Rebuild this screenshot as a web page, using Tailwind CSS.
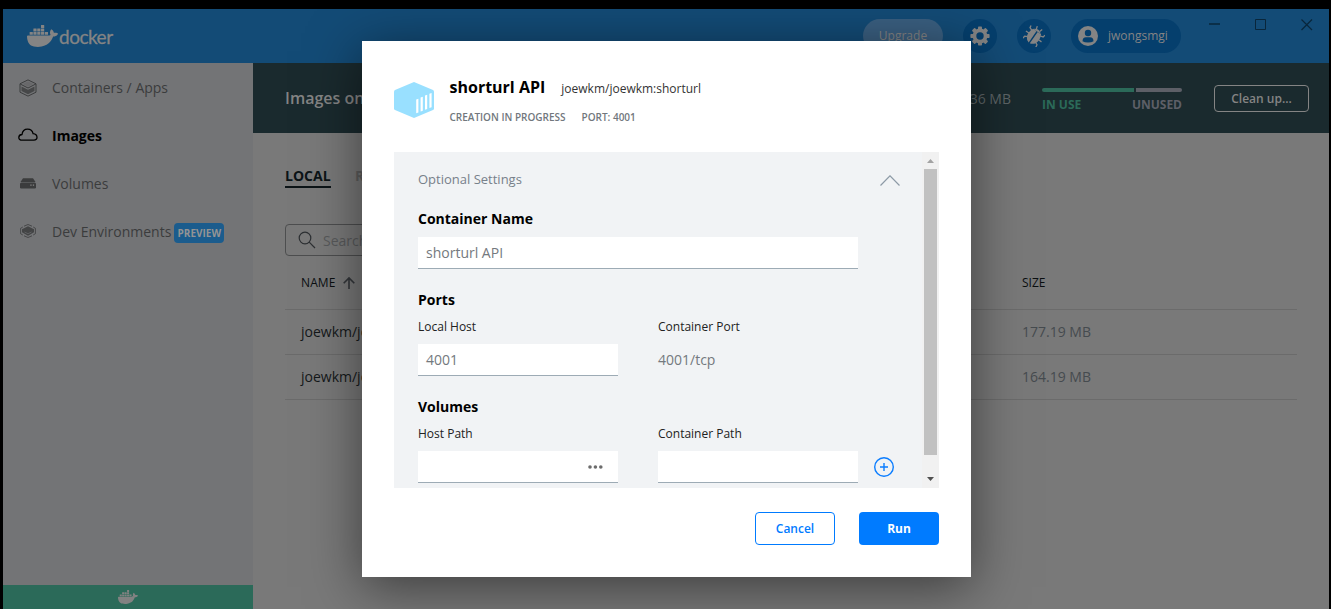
<!DOCTYPE html>
<html lang="en">
<head>
<meta charset="utf-8">
<title>Docker Desktop</title>
<script src="https://cdn.jsdelivr.net/npm/@tailwindcss/browser@4"></script>
</head>
<body class="bg-black font-['Open_Sans',sans-serif] w-[1331px] h-[609px] overflow-hidden">
<svg class="hidden">
  <symbol id="whale" viewBox="0 3.3 24 17.4" preserveAspectRatio="none"><path d="M13.983 11.078h2.119a.186.186 0 00.186-.185V9.006a.186.186 0 00-.186-.186h-2.119a.185.185 0 00-.185.185v1.888c0 .102.083.185.185.185m-2.954-5.43h2.118a.186.186 0 00.186-.186V3.574a.186.186 0 00-.186-.185h-2.118a.185.185 0 00-.185.185v1.888c0 .102.082.185.185.185m0 2.716h2.118a.187.187 0 00.186-.186V6.29a.186.186 0 00-.186-.185h-2.118a.185.185 0 00-.185.185v1.887c0 .102.082.185.185.186m-2.93 0h2.12a.186.186 0 00.184-.186V6.29a.185.185 0 00-.185-.185H8.1a.185.185 0 00-.185.185v1.887c0 .102.083.185.185.186m-2.964 0h2.119a.186.186 0 00.185-.186V6.29a.185.185 0 00-.185-.185H5.136a.186.186 0 00-.186.185v1.887c0 .102.084.185.186.186m5.893 2.715h2.118a.186.186 0 00.186-.185V9.006a.186.186 0 00-.186-.186h-2.118a.185.185 0 00-.185.185v1.888c0 .102.082.185.185.185m-2.93 0h2.12a.185.185 0 00.184-.185V9.006a.185.185 0 00-.184-.186h-2.12a.185.185 0 00-.184.185v1.888c0 .102.083.185.185.185m-2.964 0h2.119a.185.185 0 00.185-.185V9.006a.185.185 0 00-.184-.186h-2.12a.186.186 0 00-.186.186v1.887c0 .102.084.185.186.185m-2.92 0h2.12a.185.185 0 00.184-.185V9.006a.185.185 0 00-.184-.186h-2.12a.185.185 0 00-.184.185v1.888c0 .102.083.185.185.185M23.763 9.89c-.065-.051-.672-.51-1.954-.51-.338.001-.676.03-1.01.087-.248-1.7-1.653-2.53-1.716-2.566l-.344-.199-.226.327c-.284.438-.49.922-.612 1.43-.23.97-.09 1.882.403 2.661-.595.332-1.55.413-1.744.42H.751a.751.751 0 00-.75.748 11.376 11.376 0 00.692 4.062c.545 1.428 1.355 2.48 2.41 3.124 1.18.723 3.1 1.137 5.275 1.137.983.003 1.963-.086 2.93-.266a12.248 12.248 0 003.823-1.389c.98-.567 1.86-1.288 2.61-2.136 1.252-1.418 1.998-2.997 2.553-4.4h.221c1.372 0 2.215-.549 2.68-1.009.309-.293.55-.65.707-1.046l.098-.288Z"/></symbol>
</svg>

<div class="h-[609px] pt-[9px] pl-[3px] pr-[2px] flex flex-col">
  <!-- Title bar -->
  <header class="h-[54px] shrink-0 bg-[#134b76] text-[#848484] flex pl-6">
    <div class="flex pt-4 grow">
      <svg class="w-[31px] h-[22px] fill-current"><use href="#whale"/></svg>
      <span class="ml-[1px] mt-[1px] font-['Lato',sans-serif] text-[19px] leading-[22px] tracking-[-0.5px] [-webkit-text-stroke:0.3px]">docker</span>
    </div>
    <div class="flex pt-[10px] text-[12px] leading-[34px]">
      <div class="w-20 h-[34px] rounded-full bg-[#3a5f80] text-center">Upgrade</div>
      <div class="ml-5 size-[34px] rounded-full bg-[#053f6d] grid place-items-center">
        <svg class="size-5" viewBox="-10 -10 20 20">
          <g fill="currentColor">
            <rect x="-2" y="-9.6" width="4" height="19.2" rx=".8"/>
            <rect x="-2" y="-9.6" width="4" height="19.2" rx=".8" transform="rotate(45)"/>
            <rect x="-2" y="-9.6" width="4" height="19.2" rx=".8" transform="rotate(90)"/>
            <rect x="-2" y="-9.6" width="4" height="19.2" rx=".8" transform="rotate(135)"/>
            <circle r="7.4"/>
          </g>
          <circle r="3.7" fill="#053f6d"/>
        </svg>
      </div>
      <div class="ml-5 size-[34px] rounded-full bg-[#053f6d] grid place-items-center">
        <svg class="size-[22px]" viewBox="-11 -11 22 22">
          <g transform="rotate(35)" stroke="currentColor" fill="none" stroke-width="1.300">
            <path d="M-5 -3.500L-8 -4.500L-8.500 -7M5 -3.500L8 -4.500L8.500 -7M-5 .5H-9.500M5 .5H9.500M-4.500 4L-7.500 5.500L-8 8.500M4.500 4L7.500 5.500L8 8.500M-2 -7L-3 -10M2 -7L3 -10"/>
            <path d="M-4.500 -5.500Q0 -9.500 4.500 -5.500Z" fill="currentColor" stroke="none"/>
            <path d="M-.7 -5.500H-4.800Q-7.600 0 -5.600 4.500Q-3.800 7.600 -.7 8.300ZM.7 -5.500H4.800Q7.600 0 5.600 4.500Q3.800 7.600 .7 8.300Z" fill="currentColor" stroke="none"/>
          </g>
        </svg>
      </div>
      <div class="ml-5 w-[110px] h-[34px] rounded-full bg-[#053f6d] flex items-center pl-[7px]">
        <svg class="size-5" viewBox="0 0 20 20"><circle cx="10" cy="10" r="10" fill="currentColor"/><circle cx="10" cy="7" r="3.200" fill="#053f6d"/><path d="M4.500 15.200Q4.500 11.300 8 11.300H12Q15.500 11.300 15.500 15.200Q13.500 16.500 10 16.500Q6.500 16.500 4.500 15.200Z" fill="#053f6d"/></svg>
        <span class="ml-[10px]">jwongsmgi</span>
      </div>
    </div>
    <svg class="ml-[28px] mt-[10px] mr-4 w-[104px] h-3" fill="none" stroke="#09263b"><path d="M0 5H11" stroke-width="1.500"/><path d="M46.500 .5H56.500V10.500H46.500Z"/><path d="M92.500 .5L103 11M103 .5L92.500 11" stroke-width="1.200"/></svg>
  </header>

  <div class="flex grow min-h-0">
    <!-- Navigation -->
    <aside class="w-[250px] shrink-0 bg-[#737476] flex flex-col text-[14px] text-[#3b3c3d]">
      <nav class="grow">
        <div class="h-12 flex items-center pl-4">
          <svg class="w-[18px] h-[18px] mt-[1px]" viewBox="0 0 18 18" fill="none" stroke="currentColor"><path d="M9 .9L17 4.800V13.200L9 17.100L1 13.200V4.800Z"/><path d="M1.200 5L9 9L16.800 5"/><path d="M2.500 7.500L9 10.700L15.500 7.500V12L9 15.300L2.500 12Z" fill="currentColor" fill-opacity=".8" stroke="none"/><path d="M9 2.500L14.500 5L9 7.800L3.500 5Z" fill="currentColor" fill-opacity=".2" stroke="none"/></svg>
          <span class="ml-[15px]">Containers / Apps</span>
        </div>
        <div class="h-12 flex items-center pl-[15px] font-bold text-black">
          <svg class="w-5 h-[14px]" viewBox="0 0 20 14" fill="none" stroke="currentColor" stroke-width="1.300"><path d="M4.300 12.200C-.4 12.200-.2 6.900 4 6.500C4.500 2.700 7.200 1.200 9.600 1.200C12.300 1.200 14.500 3 15.100 5.600C20.300 6.300 20 12.200 15.900 12.200Z"/></svg>
          <span class="ml-[14px]">Images</span>
        </div>
        <div class="h-12 flex items-center pl-[17px]">
          <svg class="w-4 h-[11px]" viewBox="0 0 16 11" fill="currentColor"><path d="M3 .3H13L15.500 3.900H.5Z"/><path d="M0 6Q0 4.500 1.500 4.500H14.500Q16 4.500 16 6V9.300Q16 10.600 14.700 10.600H1.300Q0 10.600 0 9.300Z"/><path d="M10.300 6.500h1.300v1.300h-1.300zM12.800 6.500h1.300v1.300h-1.300z" fill="#848484"/></svg>
          <span class="ml-4">Volumes</span>
        </div>
        <div class="h-12 flex items-center pl-[17px]">
          <svg class="w-4 h-[14px]" viewBox="0 0 16 14" fill="none" stroke="currentColor" stroke-width=".8"><path d="M4 2.200L8 .5L12 2.200M4 11.800L8 13.500L12 11.800M2.800 3L.6 4.300V9.700L2.800 11M13.200 3L15.400 4.300V9.700L13.200 11"/><path d="M8 2.300L14 5.300V8.200L8 11.700L2 8.200V5.300Z" fill="currentColor" fill-opacity=".85" stroke="none"/><path d="M4.500 8L8 9.700L11.500 8" stroke="#656668"/></svg>
          <span class="ml-4">Dev Environments</span>
          <span class="ml-[3px] mt-[3px] w-[50px] h-5 rounded-[4px] bg-[#1b5c8d] text-[#949494] text-[10px] leading-[21px] font-bold text-center">PREVIEW</span>
        </div>
      </nav>
      <div class="h-6 bg-[#2b6a59] pt-[5px] flex justify-center"><svg class="w-5 h-[14px] fill-[#828282]"><use href="#whale"/></svg></div>
    </aside>

    <main class="grow bg-[#797979] flex flex-col">
      <section class="h-[70px] bg-[#1a2a2e] pl-8 pr-5 flex items-center text-[#848484]">
        <h1 class="text-[16px] font-semibold grow">Images on disk</h1>
        <span class="text-[14px] text-[#5e6567]">341.36 MB</span>
        <div class="ml-[31px] w-[140px] mt-[7px]">
          <div class="flex gap-[2px] h-1"><div class="w-[92px] bg-[#2b6a59] rounded-l-full"></div><div class="grow bg-[#5d5f67] rounded-r-full"></div></div>
          <div class="mt-[3px] flex justify-between text-[12px] leading-5 font-bold"><span class="text-[#2b6a59]">IN USE</span><span class="text-[#5d5f67]">UNUSED</span></div>
        </div>
        <div class="ml-8 w-[95px] h-[27px] border border-[#848484] rounded-[4px] text-[12px] leading-[25px] font-semibold text-center">Clean up...</div>
      </section>
      <section class="pl-8 pr-8 pt-[32px] text-[14px]">
        <div class="flex gap-6 leading-[21px] font-bold text-[#5e5e5e]"><span class="h-[23px] w-[46px] border-b-2 border-[#0c1417] text-[#0c1417]">LOCAL</span><span>REMOTE</span></div>
        <div class="mt-9 w-[280px] h-8 border border-[#4d4e4f] rounded-[4px] flex items-center pl-3 text-[#58595b]">
          <svg class="size-[18px]" viewBox="0 0 18 18" fill="none" stroke="#2d3033" stroke-width="1.200"><circle cx="7" cy="7" r="5.800"/><path d="M11.200 11.200L17 17"/></svg>
          <span class="ml-[7px]">Search...</span>
        </div>
        <div class="h-[54px] border-b border-[#6b6b6b] grid grid-cols-[721px_1fr] items-center pl-4 text-[12px] text-[#0b0f11]">
          <span class="flex items-center gap-2 tracking-[.1px]">NAME <svg class="size-3" viewBox="0 0 12 12" fill="none" stroke="#33363a" stroke-width="1.600"><path d="M6 12V1M.7 6.200L6 .9L11.300 6.200"/></svg></span><span>SIZE</span>
        </div>
        <div class="h-[45px] pb-[2px] border-b border-[#6b6b6b] grid grid-cols-[721px_1fr] items-center pl-4 font-medium text-[#14181a]"><span>joewkm/joewkm</span><span class="font-normal text-[#464b4f]">177.19 MB</span></div>
        <div class="h-[45px] pb-[2px] border-b border-[#6b6b6b] grid grid-cols-[721px_1fr] items-center pl-4 font-medium text-[#14181a]"><span>joewkm/joewkm</span><span class="font-normal text-[#464b4f]">164.19 MB</span></div>
      </section>
    </main>
  </div>
</div>

<!-- Run dialog -->
<div class="absolute left-[362px] top-[41px] w-[609px] h-[536px] bg-white px-8 pt-[34px] shadow-[0_10px_50px_rgba(0,0,0,0.5)]">
  <div class="flex h-[77px]">
    <svg class="w-10 h-9 mt-[7px]" viewBox="0 0 40 36"><path d="M20 0L39 8Q40 8.500 40 9.500V26.500Q40 27.500 39 28L20 36L1 28Q0 27.500 0 26.500V9.500Q0 8.500 1 8Z" fill="#99e0ff"/><path d="M22.200 17.500L24.400 16.800V30.500L22.200 31.300ZM26.600 15.500L28.800 14.800V28.800L26.600 29.600ZM31 13.500L33.200 12.800V27L31 27.800ZM35.400 11.700L37.600 11V25.200L35.400 26Z" fill="#fff"/></svg>
    <div class="ml-[15.500px]">
      <div class="flex items-baseline gap-4 leading-6"><h2 class="text-[16px] font-bold">shorturl API</h2><span class="text-[12px] text-[#333]">joewkm/joewkm:shorturl</span></div>
      <div class="mt-[8px] flex gap-4 text-[10px] leading-4 font-semibold text-[#71777d]"><span>CREATION IN PROGRESS</span><span>PORT: 4001</span></div>
    </div>
  </div>
  <div class="h-[336px] bg-[#f1f3f5] flex">
    <div class="grow pl-6 pt-[17px]">
      <div class="flex justify-between pr-[22px] h-5 text-[13px] leading-5 text-[#77808a]"><span>Optional Settings</span><svg class="w-5 h-[11px] mt-[6px]" viewBox="0 0 20 11" fill="none" stroke="#8d9aa6" stroke-width="1.200"><path d="M.5 10.500L10 .8L19.500 10.500"/></svg></div>
      <div class="mt-[20px] text-[14px] leading-5 font-bold">Container Name</div>
      <div class="mt-2 w-[440px] h-8 bg-white border-b border-[#9dabb5] px-2 text-[14px] leading-8 text-[#74797e]">shorturl API</div>
      <div class="mt-[21px] text-[14px] leading-5 font-bold">Ports</div>
      <div class="mt-[7px] grid grid-cols-[200px_200px] gap-x-10 gap-y-[7px]">
        <span class="text-[12px] leading-5 text-[#222]">Local Host</span><span class="text-[12px] leading-5 text-[#222]">Container Port</span>
        <div class="h-8 bg-white border-b border-[#9dabb5] px-2 text-[14px] leading-8 text-[#74797e]">4001</div><div class="text-[14px] leading-8 text-[#74797e]">4001/tcp</div>
      </div>
      <div class="mt-[21px] text-[14px] leading-5 font-bold">Volumes</div>
      <div class="mt-[7px] grid grid-cols-[200px_200px_auto] gap-x-10 gap-y-[7px]">
        <span class="text-[12px] leading-5 text-[#222]">Host Path</span><span class="text-[12px] leading-5 text-[#222] col-span-2">Container Path</span>
        <div class="h-8 bg-white border-b border-[#9dabb5] flex justify-end items-center pr-[15px]"><svg class="w-[15px] h-1" fill="#6c6c6c"><circle cx="2" cy="2" r="1.800"/><circle cx="7.400" cy="2" r="1.800"/><circle cx="12.800" cy="2" r="1.800"/></svg></div>
        <div class="h-8 bg-white border-b border-[#9dabb5]"></div>
        <svg class="size-5 mt-[6px] -ml-6" viewBox="0 0 20 20" fill="none" stroke="#0b7dff" stroke-width="1.400"><circle cx="10" cy="10" r="9.300"/><path d="M10 6V14M6 10H14"/></svg>
      </div>
    </div>
    <div class="w-[17px] shrink-0 bg-[#f1f1f1] flex flex-col items-center">
      <svg class="w-[7px] h-[17px]" viewBox="0 0 7 17"><path d="M0 11L3.500 7L7 11Z" fill="#a3a3a3"/></svg>
      <div class="w-[13px] h-[286px] bg-[#c1c1c1]"></div>
      <svg class="w-[7px] h-[33px]" viewBox="0 0 7 33"><path d="M0 22L3.500 26L7 22Z" fill="#505050"/></svg>
    </div>
  </div>
  <div class="mt-6 flex justify-end gap-6 text-[12px] font-semibold text-center">
    <button class="w-20 h-[33px] rounded-[4px] border border-[#007bff] text-[#007bff]">Cancel</button>
    <button class="w-20 h-[33px] rounded-[4px] bg-[#007bff] text-white font-bold">Run</button>
  </div>
</div>
</body>
</html>
